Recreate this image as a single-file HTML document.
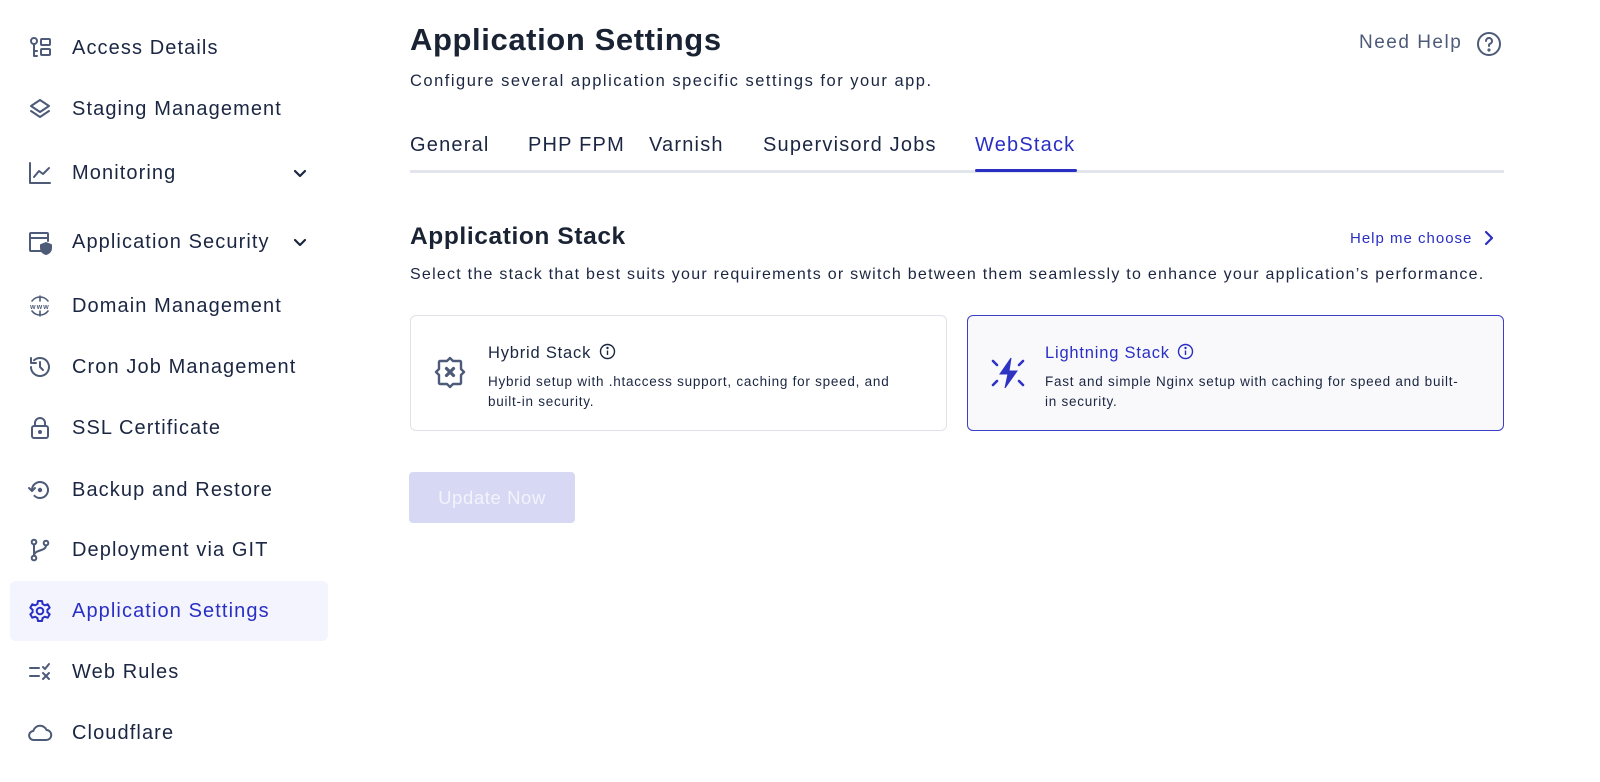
<!DOCTYPE html>
<html><head><meta charset="utf-8"><style>
*{margin:0;padding:0;box-sizing:border-box}
body{width:1600px;height:782px;background:#fff;font-family:"Liberation Sans",sans-serif;color:#1b2642;position:relative;overflow:hidden}
.nav{position:absolute;left:10px;width:318px;height:60px;display:flex;align-items:center;font-size:20px;letter-spacing:1.1px;color:#1b2642}
.nav svg{position:absolute;left:17px;width:26px;height:26px;fill:none;stroke:#4d5b78;stroke-width:2;stroke-linecap:round;stroke-linejoin:round}
.nav span{position:absolute;left:62px}
.nav .chev{left:282px;width:16px;height:16px;stroke:#1b2642;stroke-width:2.2}
.nav.active{background:#f3f4fd;border-radius:6px;color:#2a2fc4}
.nav.active svg{stroke:#2a2fc4}
.abs{position:absolute;white-space:nowrap}
.tab{position:absolute;top:134px;font-size:20px;letter-spacing:1.2px;color:#1b2642}
.card{position:absolute;top:315px;width:537px;height:116px;border:1px solid #e0e2e8;border-radius:6px;background:#fff}
.card h3{position:absolute;left:77px;top:27px;font-size:16.5px;font-weight:normal;letter-spacing:0.8px}
.card p{position:absolute;left:77px;top:56px;font-size:13.5px;line-height:20px;width:450px;color:#1b2642;letter-spacing:0.75px;white-space:nowrap}
</style></head><body>

<div class="nav" style="top:18px"><svg viewBox="0 0 26 26"><circle cx="7" cy="6" r="3"/><path d="M7 9v12h3M7 16h3"/><rect x="14" y="4" width="9" height="6" rx="1"/><rect x="14" y="14" width="9" height="6" rx="1"/></svg><span>Access Details</span></div>
<div class="nav" style="top:79px"><svg viewBox="0 0 26 26"><path d="M13 4l9 6-9 6-9-6z"/><path d="M4 15l9 6 9-6"/></svg><span>Staging Management</span></div>
<div class="nav" style="top:143px"><svg viewBox="0 0 26 26"><path d="M3 3v20h20"/><path d="M7 17l5-6 4 3 6-6"/></svg><span>Monitoring</span><svg class="chev" viewBox="0 0 16 16"><path d="M3 6l5 5 5-5"/></svg></div>
<div class="nav" style="top:212px"><svg viewBox="0 0 26 26"><path d="M14 22H4a1 1 0 0 1-1-1V5a1 1 0 0 1 1-1h16a1 1 0 0 1 1 1v7M3 9h18"/><path d="M19 14l5 2v3c0 3-2 5-5 6-3-1-5-3-5-6v-3z" fill="#4d5b78"/></svg><span>Application Security</span><svg class="chev" viewBox="0 0 16 16"><path d="M3 6l5 5 5-5"/></svg></div>
<div class="nav" style="top:276px"><svg viewBox="0 0 26 26" style="stroke-width:1.6"><path d="M5 8a10 10 0 0 1 16 0M5 18a10 10 0 0 0 16 0M13 3v5M13 18v5"/><text x="13" y="16" font-size="7" font-weight="bold" text-anchor="middle" fill="#4d5b78" stroke="none" font-family="Liberation Sans">www</text></svg><span>Domain Management</span></div>
<div class="nav" style="top:337px"><svg viewBox="0 0 26 26"><path d="M4 13a9 9 0 1 0 3-6.7"/><path d="M4 4v5h5"/><path d="M13 8v5l3 3"/></svg><span>Cron Job Management</span></div>
<div class="nav" style="top:398px"><svg viewBox="0 0 26 26"><rect x="5" y="11" width="16" height="12" rx="2"/><path d="M8 11V8a5 5 0 0 1 10 0v3"/><circle cx="13" cy="17" r="1" fill="#4d5b78"/></svg><span>SSL Certificate</span></div>
<div class="nav" style="top:460px"><svg viewBox="0 0 26 26"><path d="M5 13a8 8 0 1 1 2.5 5.8"/><path d="M2 11l3 3 3-3"/><circle cx="13" cy="13" r="1.2" fill="#4d5b78"/></svg><span>Backup and Restore</span></div>
<div class="nav" style="top:520px"><svg viewBox="0 0 26 26"><circle cx="7" cy="5" r="2.3"/><circle cx="7" cy="21" r="2.3"/><circle cx="19" cy="6" r="2.3"/><path d="M7 7.5v11M19 8.5c0 6-12 4-12 10"/></svg><span>Deployment via GIT</span></div>
<div class="nav active" style="top:581px"><svg viewBox="0 0 26 26"><path d="M11 3h4l.6 3 2.2 1.3 2.9-1 2 3.4-2.3 2v2.6l2.3 2-2 3.4-2.9-1-2.2 1.3L15 23h-4l-.6-3-2.2-1.3-2.9 1-2-3.4 2.3-2v-2.6l-2.3-2 2-3.4 2.9 1L10.4 6z"/><circle cx="13" cy="13" r="3.3"/></svg><span>Application Settings</span></div>
<div class="nav" style="top:642px"><svg viewBox="0 0 26 26"><path d="M3 9h9M3 17h9M16 8l2 2 4-5M16 14l6 6M22 14l-6 6"/></svg><span>Web Rules</span></div>
<div class="nav" style="top:703px"><svg viewBox="0 0 26 26"><path d="M7 20h12a5 5 0 0 0 .5-10A7 7 0 0 0 6.3 11 4.5 4.5 0 0 0 7 20z"/></svg><span>Cloudflare</span></div>

<div class="abs" style="left:410px;top:22px;font-size:31px;font-weight:bold;color:#1a2333;letter-spacing:0.6px">Application Settings</div>
<div class="abs" style="left:410px;top:72px;font-size:16.5px;letter-spacing:1.5px">Configure several application specific settings for your app.</div>
<div class="abs" style="left:1359px;top:32px;font-size:19px;color:#4d5b78;letter-spacing:1.5px">Need Help</div>
<svg class="abs" style="left:1476px;top:31px" width="26" height="26" viewBox="0 0 26 26" fill="none" stroke="#4d5b78" stroke-width="2" stroke-linecap="round"><circle cx="13" cy="13" r="11"/><path d="M10 10a3 3 0 1 1 4 2.8c-.7.3-1 .8-1 1.5V15"/><circle cx="13" cy="19" r=".6" fill="#4d5b78"/></svg>

<div class="tab" style="left:410px">General</div>
<div class="tab" style="left:528px">PHP FPM</div>
<div class="tab" style="left:649px">Varnish</div>
<div class="tab" style="left:763px">Supervisord Jobs</div>
<div class="tab" style="left:975px;color:#2a2fc4">WebStack</div>
<div class="abs" style="left:410px;top:170px;width:1094px;height:3px;background:#e3e5ec"></div>
<div class="abs" style="left:975px;top:169px;width:102px;height:3px;background:#2a2fc4;border-radius:2px"></div>

<div class="abs" style="left:410px;top:223px;font-size:24.5px;font-weight:bold;color:#1a2333;letter-spacing:0.6px">Application Stack</div>
<div class="abs" style="left:1350px;top:230px;font-size:15px;color:#2a2fc4;letter-spacing:1px">Help me choose</div>
<svg class="abs" style="left:1482px;top:230px" width="14" height="16" viewBox="0 0 14 16" fill="none" stroke="#2a2fc4" stroke-width="2.2" stroke-linecap="round" stroke-linejoin="round"><path d="M4 2l6 6-6 6"/></svg>
<div class="abs" style="left:410px;top:266px;font-size:16px;letter-spacing:1.25px">Select the stack that best suits your requirements or switch between them seamlessly to enhance your application’s performance.</div>

<div class="card" style="left:410px">
<svg class="abs" style="left:20px;top:36px" width="38" height="42" viewBox="0 0 38 42" fill="none" stroke="#4d5b78" stroke-width="2.4" stroke-linejoin="round"><path d="M9 9h7l3-3 3 3h7a1 1 0 0 1 1 1v7l3 3-3 3v8a1 1 0 0 1-1 1h-7l-3 3-3-3H9a1 1 0 0 1-1-1v-8l-3-3 3-3v-7a1 1 0 0 1 1-1z"/><path d="M15.5 16.5l7 7M22.5 16.5l-7 7" stroke-width="3.2" stroke-linecap="round"/></svg>
<h3>Hybrid Stack <svg width="17" height="17" viewBox="0 0 17 17" fill="none" stroke="#1b2642" stroke-width="1.4" style="vertical-align:-2px;margin-left:2px"><circle cx="8.5" cy="8.5" r="7"/><path d="M8.5 7.5v4.5"/><circle cx="8.5" cy="5" r=".5" fill="#1b2642"/></svg></h3>
<p>Hybrid setup with .htaccess support, caching for speed, and<br>built-in security.</p>
</div>
<div class="card" style="left:967px;border-color:#3a3fc6;background:#f9f9fc">
<svg class="abs" style="left:22px;top:38px" width="36" height="38" viewBox="0 0 36 38" fill="none" stroke="#2e33c2" stroke-width="2.6" stroke-linecap="round"><path d="M21 4L10 20h8l-3 14 12-17h-8z" fill="#2e33c2" stroke-width="1"/><path d="M3 7l4 4M33 7l-4 4M3 31l4-4M33 31l-4-4"/></svg>
<h3 style="color:#2a2fc4">Lightning Stack <svg width="17" height="17" viewBox="0 0 17 17" fill="none" stroke="#2a2fc4" stroke-width="1.4" style="vertical-align:-2px;margin-left:2px"><circle cx="8.5" cy="8.5" r="7"/><path d="M8.5 7.5v4.5"/><circle cx="8.5" cy="5" r=".5" fill="#2a2fc4"/></svg></h3>
<p>Fast and simple Nginx setup with caching for speed and built-<br>in security.</p>
</div>

<div class="abs" style="left:409px;top:472px;width:166px;height:51px;background:#d7d8f4;border-radius:4px;color:#f3f3fc;font-size:18.5px;display:flex;align-items:center;justify-content:center;letter-spacing:0.6px">Update Now</div>
</body></html>
